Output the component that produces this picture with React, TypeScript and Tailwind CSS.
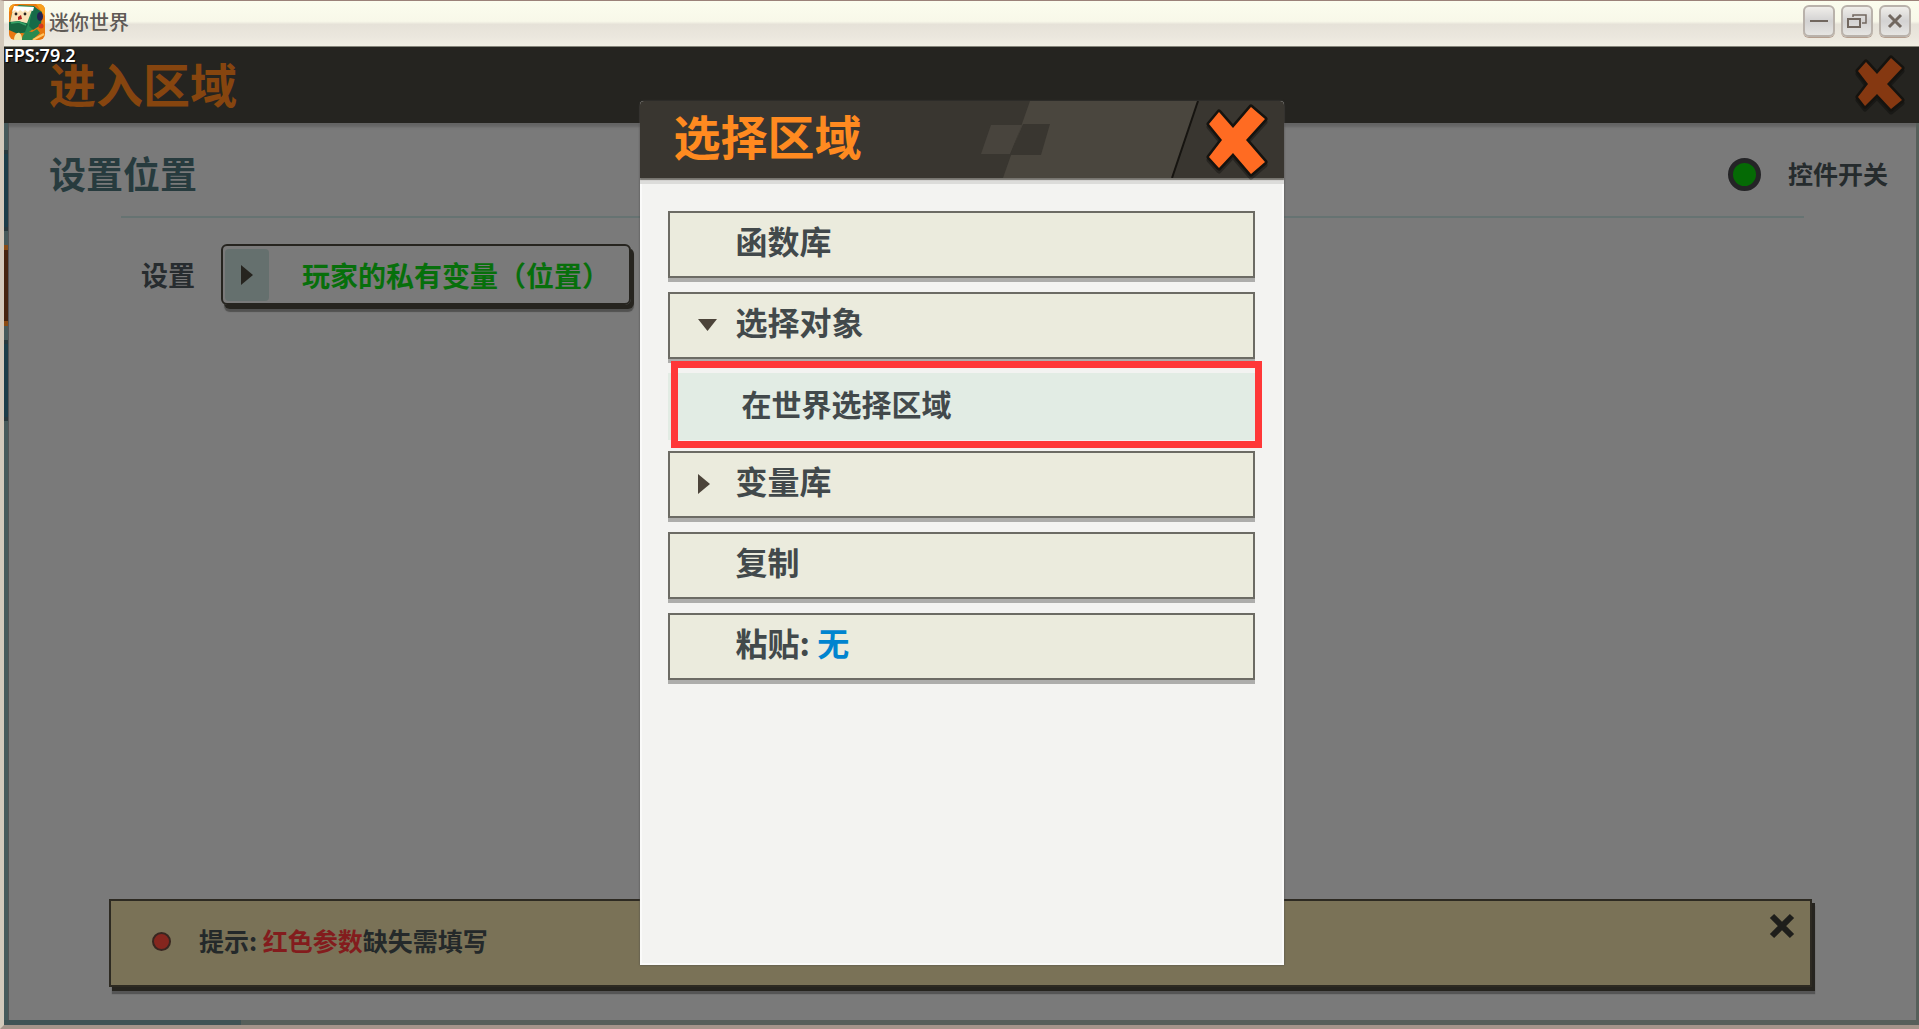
import React from "react";

function CrossMark({ className, points, viewBox, fill }: { className: string; points: string; viewBox: string; fill: string }) {
  return (
    <svg className={className} viewBox={viewBox} aria-hidden="true">
      <polygon points={points} transform="translate(0 3)" fill="#000" opacity="0.3" stroke="#000" strokeWidth="5" strokeLinejoin="round" />
      <polygon points={points} fill={fill} stroke="#15130f" strokeWidth="5" strokeLinejoin="round" paintOrder="stroke" />
    </svg>
  );
}

function AppIcon() {
  return (
    <svg className="size-9 rounded-md" viewBox="0 0 36 36" aria-hidden="true">
      <rect width="36" height="36" fill="#e8780f" />
      <path d="M0 8 6 0H0ZM27 0h9v12Z" fill="#f7a01d" />
      <path d="M1 18 4 5 10 1l15 1 4 4-2 17-10 7-11-3-5-4Z" fill="#238a55" />
      <path d="m24 2 9 6-1 13-8 5-4-4Z" fill="#176b49" />
      <path d="M31 8c4 0 4 9 0 9-4 0-4-9 0-9Z" fill="#242350" />
      <path d="M4 5 23 6l-5 13-8-1-9 1Z" fill="#fbe3b8" />
      <path d="M5 2 25 3l-1 4-3-1-2 2-3-2-2 2-3-2-2 2-3-2-3 2Z" fill="#fff" />
      <circle cx="7" cy="10" r="1.4" fill="#2a2320" />
      <circle cx="16" cy="10" r="1.4" fill="#2a2320" />
      <path d="m9 13 3-2 1 4-4 1Z" fill="#b3211b" />
      <path d="m0 18 10-1 9 3-3 8-7 2-9-4Z" fill="#18653f" />
      <path d="m2 19 8-1 7 3" fill="none" stroke="#35a467" strokeWidth="1.5" />
      <path d="M5 36c0-8 8-11 8 0Z" fill="#f3e7a4" />
      <path d="M13 36c0-7 5-9 10-8l5-3 3 4-8 7Z" fill="#2a8a50" />
      <circle cx="32" cy="22" r="2.5" fill="#d4381c" />
      <path d="m24 36 11-6" stroke="#ffc766" strokeWidth="2" />
    </svg>
  );
}

function WindowButton({ label, children }: { label: string; children: React.ReactNode }) {
  return (
    <button
      aria-label={label}
      className="flex size-8 items-center justify-center rounded-md border-2 border-[#b9b2ab] bg-gradient-to-b from-[#f0eeea] via-[#d3d2d2] to-[#e6e5e2] shadow-[0_1px_0_#b59f8f]"
    >
      <svg className="h-5 w-5" viewBox="0 0 20 20" fill="none" stroke="#71675f" strokeWidth="2" aria-hidden="true">
        {children}
      </svg>
    </button>
  );
}

function TitleBar() {
  return (
    <header className="flex h-[46px] shrink-0 items-center justify-between border-b border-[#85857a] bg-[linear-gradient(#fbfdee_0%,#f8f8e9_45%,#e6e2d8_52%,#ebe7de_80%,#f1eee3_100%)] pr-2 pb-1 pl-[5px]">
      <div className="flex items-center gap-1">
        <AppIcon />
        <h1 className="text-[20px] leading-6 font-medium text-[#5f5a56]">迷你世界</h1>
      </div>
      <div className="flex gap-1.5 pb-0.5">
        <WindowButton label="最小化"><path d="M1 10h18" /></WindowButton>
        <WindowButton label="还原">
          <path d="M1 8h12v8H1Z" /><path d="M6 6V4h13v8h-4" strokeWidth="1.5" />
        </WindowButton>
        <WindowButton label="关闭窗口"><path d="m4 4 12 12M16 4 4 16" strokeWidth="3" /></WindowButton>
      </div>
    </header>
  );
}

function SideRail() {
  return (
    <nav aria-label="标签" className="flex w-[5px] shrink-0 flex-col gap-3.5 border-r border-[#555] bg-[#475a5b] pt-[27px]">
      <div className="h-[81px] border-y-4 border-[#27383d] bg-[#1c3d49]" />
      <div className="h-[81px] border-y-5 border-[#8a4b14] bg-[#44230f]" />
      <div className="h-[81px] border-y-4 border-[#27383d] bg-[#1c3d49]" />
    </nav>
  );
}

function MainPage() {
  return (
    <main className="flex min-w-0 flex-1 flex-col">
      <output className="-mb-4 h-4 pl-0 font-['Noto_Sans'] text-[18px] leading-4 font-semibold text-white [text-shadow:1px_1px_1px_#000] relative z-10">FPS:79.2</output>
      <div className="flex h-[76px] shrink-0 items-center justify-between bg-[#252420] pr-3 pl-[45px]">
        <h2 className="pb-1 text-[47px] leading-[48px] font-bold text-[#86450f]">进入区域</h2>
        <button aria-label="关闭">
          <CrossMark className="h-[62px] w-[52px]" viewBox="0 0 52 62" fill="#853811" points="11,8 22,20 36,4 47,14 32,30 47,46 36,55 22,40 10,52 3,43 13,30 3,17" />
        </button>
      </div>
      <div className="flex min-h-0 flex-1">
        <SideRail />
        <section className="flex flex-1 flex-col border-r-3 border-[#565f5a] bg-[#7a7a7a] shadow-[inset_0_7px_3px_-3px_#646464]">
          <div className="flex h-[93px] items-center justify-between pt-1.5 pr-7 pl-10">
            <h3 className="text-[37px] leading-10 font-bold text-[#273b3e]">设置位置</h3>
            <label className="flex items-center gap-[27px] text-[25px] leading-8 font-bold text-[#252b2d]">
              <input type="checkbox" defaultChecked className="mt-1 size-[33px] appearance-none rounded-full border-5 border-[#242426] bg-[#056a05]" />
              控件开关
            </label>
          </div>
          <hr className="mr-[112px] ml-[112px] border-t-2 border-[#667372]" />
          <div className="mt-[26px] ml-[132px] flex items-center gap-[26px]">
            <span className="text-[27px] leading-8 font-bold text-[#272c2f]">设置</span>
            <button className="flex h-[61px] w-[410px] items-center rounded-md border-2 border-[#26241f] p-0.5 pl-0.5 text-[28px] font-bold text-[#076f0b] shadow-[3px_4px_0_#26241f,3px_7px_1px_#515150]">
              <span className="flex h-[52px] w-11 items-center rounded bg-[#65706e] pl-4">
                <svg className="h-5 w-3" viewBox="0 0 12 20" aria-hidden="true"><path d="M0 0 12 10 0 20Z" fill="#26241f" /></svg>
              </span>
              <span className="ml-[33px] whitespace-nowrap">玩家的私有变量（位置）</span>
            </button>
          </div>
          <aside className="mt-auto mr-[104px] mb-[33px] ml-25 flex h-[88px] items-start border-2 border-[#2d2a22] bg-[#7a7257] shadow-[3px_4px_0_#26241f,3px_7px_1px_#555]">
            <p className="flex flex-1 items-center gap-7 self-center pb-1 pl-[41px] text-[25px] leading-8 font-bold text-[#24292a]">
              <span className="size-[19px] rounded-full border-2 border-[#382620] bg-[#85261e]" />
              <span className="pb-0.5">提示: <span className="text-[#831c1d]">红色参数</span>缺失需填写</span>
            </p>
            <button aria-label="关闭提示" className="mt-3 mr-[15px]">
              <svg className="h-[26px] w-[26px]" viewBox="0 0 26 26" aria-hidden="true"><path d="m3 3 20 20M23 3 3 23" stroke="#1e1e1b" strokeWidth="6" /></svg>
            </button>
          </aside>
        </section>
      </div>
      <div className="flex h-[5px] shrink-0 bg-[#565f5a]">
        <div className="w-[237px] bg-[#3f5355]" />
      </div>
    </main>
  );
}

function Row({ children, arrow }: { children: React.ReactNode; arrow?: "down" | "right" }) {
  return (
    <button className="flex h-[67px] w-full items-center border-2 border-[#6c6b64] bg-[#ebebdd] pb-2.5 text-[32px] leading-10 font-bold text-[#42494b] shadow-[0_4px_0_#adadab]">
      <span className="flex w-[66px] pt-2 pl-7">
        {arrow === "down" && <svg className="h-3 w-[19px]" viewBox="0 0 19 12" aria-hidden="true"><path d="M0 0h19L9.500 12Z" fill="#4c443a" /></svg>}
        {arrow === "right" && <svg className="h-5 w-3" viewBox="0 0 12 20" aria-hidden="true"><path d="M0 0 12 10 0 20Z" fill="#4c443a" /></svg>}
      </span>
      <span>{children}</span>
    </button>
  );
}

function RegionDialog() {
  return (
    <div className="absolute inset-0 z-20 flex items-start justify-center pt-[100px]">
      <div role="dialog" aria-modal="true" aria-labelledby="dialog-title" className="flex min-h-[864px] w-[644px] flex-col rounded-t border-2 border-t-0 border-[#fafaf9] bg-[#f3f3f1] shadow-[0_0_2px_#444]">
        <div className="relative -mx-0.5 flex h-[77px] items-center justify-between overflow-visible rounded-t bg-[#393630] pr-3.5 pl-[34px] shadow-[0_2px_1px_#77756f,0_6px_0_#dcdcda]">
          <svg className="absolute inset-0 h-full w-full" viewBox="0 0 644 77" preserveAspectRatio="none" aria-hidden="true">
            <path d="M390 0H558L532 77H363Z" fill="#4a463e" />
            <path d="M351 24H382L370 53H341Z" fill="#48443d" />
            <path d="M383 23H410L401 54H370Z" fill="#393630" />
            <path d="M558 0 532 77" stroke="#161410" strokeWidth="2" />
          </svg>
          <h2 id="dialog-title" className="relative pb-2.5 text-[47px] leading-[66px] font-bold text-[#ff8a20]">选择区域</h2>
          <button aria-label="关闭对话框" className="relative -mb-1">
            <CrossMark className="h-[82px] w-16" viewBox="0 0 64 82" fill="#ff6b22" points="13,11 27,27 45,6 59,18 40,39 59,61 45,73 27,52 13,67 3,56 16,39 3,23" />
          </button>
        </div>
        <div className="flex flex-col gap-3.5 pt-[33px] pr-[27px] pb-8 pl-[26px]">
          <Row>函数库</Row>
          <div>
            <Row arrow="down">选择对象</Row>
            <div className="relative mt-3.5 mb-[-3px]">
              <button className="flex h-[67px] w-full items-center bg-[#e2ece4] pb-2 pl-[74px] text-[30px] leading-10 font-bold text-[#42494b]">在世界选择区域</button>
              <div className="pointer-events-none absolute -top-3 -right-[7px] -bottom-2 left-[3px] border-7 border-[#ff3838]" />
            </div>
          </div>
          <Row arrow="right">变量库</Row>
          <Row>复制</Row>
          <Row>粘贴: <span className="text-[#0084cf]">无</span></Row>
        </div>
      </div>
    </div>
  );
}

export default function App() {
  return (
    <div className="relative flex min-h-screen flex-col border-t-1 border-b-4 border-l-4 border-t-[#9b8279] border-b-[#a4948a] border-l-[#d3c9bb] bg-[#7a7a7a] font-['Noto_Sans_CJK_SC',sans-serif]">
      <TitleBar />
      <MainPage />
      <RegionDialog />
    </div>
  );
}
